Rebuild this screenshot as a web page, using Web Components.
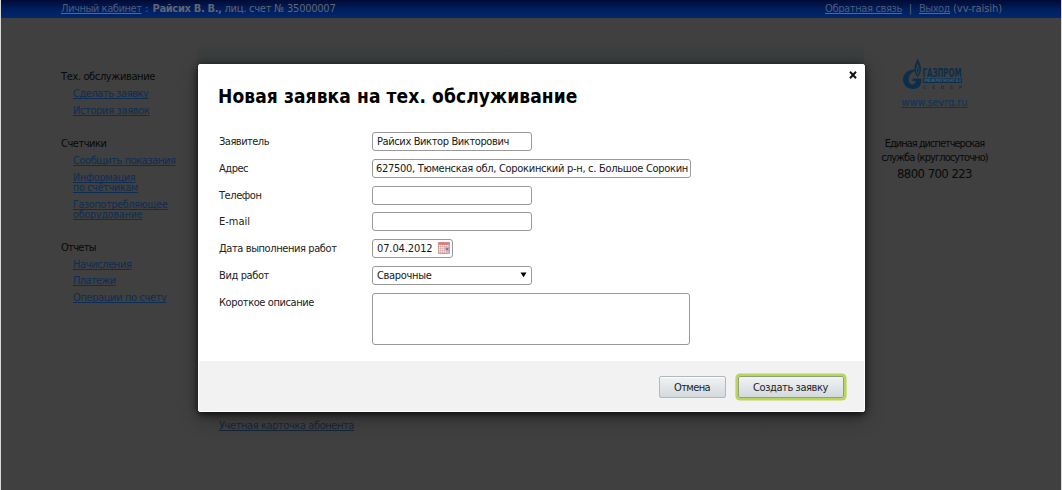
<!DOCTYPE html>
<html lang="ru">
<head>
<meta charset="utf-8">
<title>Личный кабинет</title>
<style>
html,body{margin:0;height:490px;overflow:hidden;background:#404040}
body{font:11px/17px "DejaVu Sans Condensed","DejaVu Sans",sans-serif;color:#000}
</style>
</head>
<body>
<account-page></account-page>
<script>
function define(name, markup, setup){
  const t=document.createElement('template');
  t.innerHTML=markup;
  customElements.define(name, class extends HTMLElement{
    connectedCallback(){
      if(this.shadowRoot) return;
      this.attachShadow({mode:'open'}).appendChild(t.content.cloneNode(true));
      if(setup) setup(this);
    }
  });
}

/* One line of text, tracked so that it spans the width given in "w". */
define('fit-text', `<style>:host{display:inline-block;white-space:nowrap;vertical-align:top}span{display:inline-block;white-space:pre}:host([u]) span{text-decoration:underline;text-underline-offset:1px;text-decoration-thickness:1px;text-decoration-skip-ink:none}</style><span><slot></slot></span>`, el=>{
  const s=el.shadowRoot.querySelector('span'), w=+el.getAttribute('w');
  const n=el.textContent.length;
  if(w&&n>1){
    s.style.letterSpacing=((w-s.getBoundingClientRect().width)/n)+'px';
  }
});

define('nav-group', `<style>:host{display:block;color:#080808}.links{padding-left:12px;color:#0d2d55;display:flex;flex-direction:column;align-items:flex-start}.h{height:16.8px}::slotted(*){height:16.8px}::slotted(.two){height:26.8px;font-size:10.5px;line-height:10px;padding-top:3.6px;box-sizing:border-box}</style>
<div class="h"><slot name="title"></slot></div><div class="links"><slot></slot></div>`);

define('form-row', `<style>:host{display:flex;height:18.4px;margin-bottom:8.4px;align-items:flex-start}.l{width:153px;line-height:19px;color:#222}:host([tall]){height:52px;margin:0}</style>
<div class="l"><slot name="label"></slot></div><slot></slot>`);

define('form-field', `<style>:host{box-sizing:border-box;display:flex;align-items:center;width:160px;height:19px;border:1px solid #999;border-radius:3px;background:#fff;padding:0 4px;color:#181818;line-height:17px;overflow:hidden}
:host([kind=date]){width:81px;justify-content:space-between;padding-right:2.500px}
:host([kind=select]){justify-content:space-between;padding-right:4.500px}
:host([kind=wide]){width:319px;padding:0 3px}
:host([kind=area]){width:318px;height:52px}</style><slot></slot>`);

define('push-button', `<style>:host{box-sizing:border-box;display:flex;align-items:center;justify-content:center;width:67px;height:22px;border:1px solid #b4b8ba;border-radius:2px;background:linear-gradient(#f1f3f4,#e2e6e8 50%,#d4d9dc);color:#202427;box-shadow:inset 0 1px #fafafa}
:host([primary]){width:106px;border-color:#939f78;box-shadow:0 0 0 2.6px #b8d65b}</style><slot></slot>`);

define('calendar-icon', `<style>:host,svg{display:block}:host{margin-top:-2px}</style><svg width="12" height="12" viewBox="0 0 12 12"><rect width="12" height="12" rx="1" fill="#d99b98"/><rect x=".5" y=".5" width="11" height="2" fill="#e57570"/><g fill="#faeae8"><path d="M1 3h1.5v1.5H1zM3 3h1.5v1.5H3zM5 3h1.5v1.5H5zM7 3h1.5v1.5H7zM9 3h1.5v1.5H9zM1 5h1.5v1.5H1zM3 5h1.5v1.5H3zM5 5h1.5v1.5H5zM1 7h1.5v1.5H1zM3 7h1.5v1.5H3zM5 7h1.5v1.5H5zM1 9h1.5v1.5H1zM3 9h1.5v1.5H3zM5 9h1.5v1.5H5zM7 9h1.5v1.5H7z"/></g><path d="M6.8 5h4v3.5h-4z" fill="#b9b4db"/><path d="M8.2 6h2v2h-2z" fill="#6475c4"/><path d="M9 9.5h2v1.5H9z" fill="#c9c2da"/></svg>`);

define('company-logo', `<style>:host,svg{display:block}text{font-family:"Liberation Sans Narrow","DejaVu Sans Condensed",sans-serif;font-weight:bold}</style>
<svg width="66" height="34" viewBox="0 0 66 34" overflow="visible">
<path d="M13 12.4C6 12.2 1 16.8 1 22.6 1 28.6 5.600 32 11 32c5 0 8.300-3 8.300-8v-2.600H10.500v2.700h3.200c-.3 2.300-1.500 3.500-3.300 3.500-2.600 0-3.900-2.300-3.600-5.500.3-4 2.800-7 6.200-8z" fill="#0c2e4b"/>
<path d="M15.700.5c-.4 3-3.200 6.500-3.200 11.500 0 4 1.400 6.300 3.200 7.700 2-1.600 3.300-4.200 3.300-7.700 0-4.800-2.900-8.400-3.300-11.500z" fill="#0c2e4b"/>
<path d="M15.700 6c-.4 3-1.700 4.600-1.700 7.200 0 2.200.8 3.800 1.700 4.800 1-1.100 1.800-2.700 1.800-4.800 0-2.600-1.500-4.200-1.800-7.200z" fill="#3d4347"/>
<path d="M15.700 9.500c-.3 1.700-.8 2.700-.8 4s.4 2.300.8 3c.5-.7.9-1.700.9-3s-.6-2.400-.9-4z" fill="#0c2e4b"/>
<text x="20.500" y="19.500" font-size="12.500" textLength="39" lengthAdjust="spacingAndGlyphs" fill="#0c2e4b">ГАЗПРОМ</text>
<rect x="21" y="21" width="39" height="5" fill="#0c2e4b"/>
<text x="22" y="25.300" font-size="4.800" textLength="37" lengthAdjust="spacingAndGlyphs" fill="#49596a">МЕЖРЕГИОНГАЗ</text>
<text x="21" y="32" font-size="4.800" textLength="39" fill="#232f3b">СЕВЕР</text>
</svg>`);

define('request-dialog', `<style>
:host{position:absolute;left:197px;top:63.500px;width:667px;height:348.500px;box-sizing:border-box;background:#fff;border:1px solid #fff;border-radius:2px;box-shadow:0 2px 7px rgba(0,0,0,.75),0 6px 20px rgba(0,0,0,.3);display:flex;flex-direction:column}
.close{position:absolute;right:7px;top:6px;width:8px;height:8px}
h1{margin:0;padding:19.500px 0 0 19px;height:48px;font:bold 19px/25px "DejaVu Sans Condensed","DejaVu Sans",sans-serif;color:#000}
form{padding-left:20px;flex:1}
footer{height:48px;padding-top:2px;box-sizing:content-box;background:#f2f2f2;display:flex;justify-content:flex-end;align-items:center;gap:12px;padding-right:20.500px}
.close svg{display:block}
</style>
<div class="close"><svg width="8" height="8" viewBox="0 0 8 8"><path d="M1 .8 7 7.200M7 .8 1 7.200" stroke="#111" stroke-width="2"/></svg></div>
<h1><fit-text w="359.500">Новая заявка на тех. обслуживание</fit-text></h1>
<form>
<form-row><fit-text slot="label" w="50">Заявитель</fit-text><form-field><fit-text w="132">Райсих Виктор Викторович</fit-text></form-field></form-row>
<form-row><fit-text slot="label" w="29">Адрес</fit-text><form-field kind="wide"><fit-text w="312">627500, Тюменская обл, Сорокинский р-н, с. Большое Сорокин</fit-text></form-field></form-row>
<form-row><fit-text slot="label" w="42.500">Телефон</fit-text><form-field></form-field></form-row>
<form-row><fit-text slot="label" w="31">E-mail</fit-text><form-field></form-field></form-row>
<form-row><fit-text slot="label" w="117.500">Дата выполнения работ</fit-text><form-field kind="date"><fit-text w="55.500">07.04.2012</fit-text><calendar-icon></calendar-icon></form-field></form-row>
<form-row><fit-text slot="label" w="50">Вид работ</fit-text><form-field kind="select"><fit-text w="54.500">Сварочные</fit-text><svg width="7" height="6" viewBox="0 0 7 6"><path d="M.5.5h6L3.500 5.200z" fill="#000"/></svg></form-field></form-row>
<form-row tall><fit-text slot="label" w="95">Короткое описание</fit-text><form-field kind="area"></form-field></form-row>
</form>
<footer><push-button><fit-text w="36">Отмена</fit-text></push-button><push-button primary><fit-text w="75">Создать заявку</fit-text></push-button></footer>`);

define('account-page', `<style>
:host{display:block;position:relative;box-sizing:border-box;width:1062px;height:490px;background:#404040;border:solid #d8d8d8;border-width:0 1px;overflow:hidden}
header{height:17.500px;background:linear-gradient(#000b35,#001f60 55%,#01276c);display:flex;justify-content:space-between;padding:0 59px 0 60px;box-sizing:border-box;color:#5f6675;line-height:17.500px}
header u{text-decoration:none;color:#4b5b78}
header div{display:flex}
main{display:grid;grid-template-columns:196px 667px 1fr;height:472px}
nav{padding:50.800px 0 0 60px;width:120px;display:flex;flex-direction:column;gap:16.500px}
section{margin-top:27px;height:420px;background:linear-gradient(#3d4040,#393c3b 20px,#3e3e3e 60%,#404040);padding:372px 0 0 22px;box-sizing:border-box;color:#152638}
aside{padding-top:39.500px;display:flex;flex-direction:column;align-items:center;width:141px;color:#090909}
.site{color:#0e315c;height:46px;line-height:24px}
.big{line-height:19px;font-size:13px}
.t{line-height:13.500px}
</style>
<header><div><fit-text u w="80.500"><u>Личный кабинет</u></fit-text><fit-text w="11"> : </fit-text><b><fit-text w="69">Райсих В. В.,</fit-text></b><fit-text w="114"> лиц. счет № 35000007</fit-text></div>
<div><fit-text u w="77"><u>Обратная связь</u></fit-text><fit-text w="17">  |  </fit-text><fit-text u w="31"><u>Выход</u></fit-text><fit-text w="52"> (vv-raisih)</fit-text></div></header>
<main>
<nav>
<nav-group><fit-text slot="title" w="94">Тех. обслуживание</fit-text><fit-text u w="75.500">Сделать заявку</fit-text><fit-text u w="76.500">История заявок</fit-text></nav-group>
<nav-group><fit-text slot="title" w="45.500">Счетчики</fit-text><fit-text u w="102.500">Сообщить показания</fit-text><div class="two"><fit-text u w="62.500">Информация</fit-text><br><fit-text u w="65">по счётчикам</fit-text></div><div class="two"><fit-text u w="94.500">Газопотребляющее</fit-text><br><fit-text u w="69.500">оборудование</fit-text></div></nav-group>
<nav-group><fit-text slot="title" w="35">Отчеты</fit-text><fit-text u w="58.500">Начисления</fit-text><fit-text u w="42.500">Платежи</fit-text><fit-text u w="93.500">Операции по счету</fit-text></nav-group>
</nav>
<section><fit-text u w="135">Учетная карточка абонента</fit-text></section>
<aside><company-logo></company-logo><fit-text class="site" u w="66">www.sevrg.ru</fit-text><fit-text class="t" w="99.500">Единая диспетчерская</fit-text><fit-text class="t" w="106.500">служба (круглосуточно)</fit-text><fit-text class="big" w="75">8800 700 223</fit-text></aside>
</main>
<request-dialog></request-dialog>`);
</script>
</body>
</html>
